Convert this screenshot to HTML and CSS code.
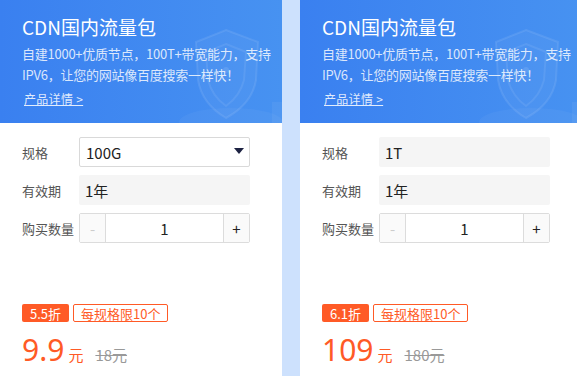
FILE: index.html
```html
<!DOCTYPE html>
<html lang="zh-CN">
<head>
    <meta charset="UTF-8">
    <meta name="viewport" content="width=device-width, initial-scale=1.0">
    <title>CDN流量包</title>
    <link rel="stylesheet" href="styles.css">
</head>
<body>
    <div class="card-list">
        <div class="package-card">
            <div class="package-header">
                <svg class="header-art" width="110" height="110" viewBox="0 0 110 110">
                    <ellipse cx="55" cy="100" rx="52" ry="14" fill="#ffffff" fill-opacity="0.04"/>
                    <path d="M50 8 L82 20 L80 58 Q76 82 50 96 Q26 82 22 58 L20 20 Z" fill="#ffffff" fill-opacity="0.04" stroke="#ffffff" stroke-opacity="0.09" stroke-width="2"/>
                    <path d="M50 22 L70 30 L68 58 Q64 74 50 84 Q36 74 32 58 L30 30 Z" fill="none" stroke="#ffffff" stroke-opacity="0.08" stroke-width="2"/>
                    <circle cx="50" cy="48" r="3" fill="#ffffff" fill-opacity="0.1"/>
                    <rect x="96" y="80" width="14" height="30" fill="#ffffff" fill-opacity="0.05"/>
                </svg>
                <h2 class="package-title">CDN国内流量包</h2>
                <p class="package-desc">自建1000+优质节点，100T+带宽能力，支持IPV6，让您的网站像百度搜索一样快！</p>
                <a class="package-link" href="#">产品详情 &gt;</a>
            </div>
            <div class="package-body">
                <div class="form-row">
                    <span class="form-label">规格</span>
                    <div class="form-select">100G<span class="select-arrow"></span></div>
                </div>
                <div class="form-row">
                    <span class="form-label">有效期</span>
                    <div class="form-static">1年</div>
                </div>
                <div class="form-row">
                    <span class="form-label">购买数量</span>
                    <div class="stepper">
                        <span class="stepper-btn disabled">-</span>
                        <span class="stepper-value">1</span>
                        <span class="stepper-btn">+</span>
                    </div>
                </div>
                <div class="tags">
                    <span class="tag-discount">5.5折</span>
                    <span class="tag-limit">每规格限10个</span>
                </div>
                <div class="price">
                    <span class="price-now">9.9</span>
                    <span class="price-unit">元</span>
                    <span class="price-old">18元</span>
                </div>
            </div>
        </div>

        <div class="package-card">
            <div class="package-header">
                <svg class="header-art" width="110" height="110" viewBox="0 0 110 110">
                    <ellipse cx="55" cy="100" rx="52" ry="14" fill="#ffffff" fill-opacity="0.04"/>
                    <path d="M50 8 L82 20 L80 58 Q76 82 50 96 Q26 82 22 58 L20 20 Z" fill="#ffffff" fill-opacity="0.04" stroke="#ffffff" stroke-opacity="0.09" stroke-width="2"/>
                    <path d="M50 22 L70 30 L68 58 Q64 74 50 84 Q36 74 32 58 L30 30 Z" fill="none" stroke="#ffffff" stroke-opacity="0.08" stroke-width="2"/>
                    <circle cx="50" cy="48" r="3" fill="#ffffff" fill-opacity="0.1"/>
                    <rect x="96" y="80" width="14" height="30" fill="#ffffff" fill-opacity="0.05"/>
                </svg>
                <h2 class="package-title">CDN国内流量包</h2>
                <p class="package-desc">自建1000+优质节点，100T+带宽能力，支持IPV6，让您的网站像百度搜索一样快！</p>
                <a class="package-link" href="#">产品详情 &gt;</a>
            </div>
            <div class="package-body">
                <div class="form-row">
                    <span class="form-label">规格</span>
                    <div class="form-static">1T</div>
                </div>
                <div class="form-row">
                    <span class="form-label">有效期</span>
                    <div class="form-static">1年</div>
                </div>
                <div class="form-row">
                    <span class="form-label">购买数量</span>
                    <div class="stepper">
                        <span class="stepper-btn disabled">-</span>
                        <span class="stepper-value">1</span>
                        <span class="stepper-btn">+</span>
                    </div>
                </div>
                <div class="tags">
                    <span class="tag-discount">6.1折</span>
                    <span class="tag-limit">每规格限10个</span>
                </div>
                <div class="price">
                    <span class="price-now">109</span>
                    <span class="price-unit">元</span>
                    <span class="price-old">180元</span>
                </div>
            </div>
        </div>
    </div>
</body>
</html>
```

FILE: styles.css
```css
body {
    margin: 0;
    font-family: "Noto Sans CJK SC", "Noto Sans", sans-serif;
    background-color: #cde1fd;
    height: 376px;
    overflow: hidden;
}

.card-list {
    display: flex;
    gap: 18px;
}

.package-card {
    flex: 0 0 282px;
    height: 376px;
    background-color: #ffffff;
}

.package-header {
    position: relative;
    height: 123px;
    box-sizing: border-box;
    padding: 13px 6px 0 22px;
    background: linear-gradient(90deg, #3a80f0 0%, #4792f1 100%);
    color: #ffffff;
    overflow: hidden;
}

.header-art {
    position: absolute;
    right: -4px;
    top: 22px;
}

.package-title {
    position: relative;
    margin: 0;
    font-size: 19px;
    font-weight: normal;
    line-height: 28px;
}

.package-desc {
    position: relative;
    margin: 2px 0 0;
    font-size: 13px;
    line-height: 21px;
    letter-spacing: -0.25px;
    color: rgba(255, 255, 255, 0.82);
}

.package-link {
    position: relative;
    display: inline-block;
    margin: 0 0 0 2px;
    font-size: 12px;
    line-height: 20px;
    letter-spacing: 0.3px;
    color: rgba(255, 255, 255, 0.85);
    text-decoration: underline;
}

.package-body {
    padding: 14px 32px 0 22px;
}

.form-row {
    display: flex;
    align-items: center;
    height: 30px;
    margin-bottom: 8px;
}

.form-label {
    width: 57px;
    flex: none;
    font-size: 13px;
    color: #555555;
}

.form-select,
.form-static {
    display: flex;
    align-items: center;
    flex: 1;
    height: 30px;
    box-sizing: border-box;
    padding-left: 6px;
    font-size: 15px;
    color: #222222;
    border-radius: 2px;
}

.form-select {
    border: 1px solid #d9d9d9;
    justify-content: space-between;
    padding-right: 5px;
}

.select-arrow {
    width: 0;
    height: 0;
    border-left: 5px solid transparent;
    border-right: 5px solid transparent;
    border-top: 6px solid #1d2242;
    margin-bottom: 3px;
}

.form-static {
    background-color: #f5f5f5;
}

.stepper {
    display: flex;
    flex: 1;
    height: 30px;
    box-sizing: border-box;
    border: 1px solid #dcdcdc;
    border-radius: 2px;
}

.stepper-btn {
    width: 25px;
    display: flex;
    align-items: center;
    justify-content: center;
    font-size: 15px;
    color: #222222;
    background-color: #fafafa;
}

.stepper-btn.disabled {
    color: #cccccc;
}

.stepper-value {
    flex: 1;
    display: flex;
    align-items: center;
    justify-content: center;
    font-size: 15px;
    color: #222222;
    border-left: 1px solid #dcdcdc;
    border-right: 1px solid #dcdcdc;
}

.tags {
    display: flex;
    gap: 4px;
    margin-top: 61px;
}

.tag-discount,
.tag-limit {
    height: 18px;
    box-sizing: border-box;
    display: flex;
    align-items: center;
    padding: 0 7px;
    font-size: 13px;
    border-radius: 2px;
}

.tag-discount {
    background-color: #ff5a26;
    color: #ffffff;
    padding: 0 8px;
}

.tag-limit {
    border: 1px solid #ff5a26;
    color: #ff5a26;
}

.price {
    display: flex;
    align-items: baseline;
    margin-top: 8px;
}

.price-now {
    font-size: 30px;
    line-height: 40px;
    color: #ff5a26;
    font-family: "Noto Sans", sans-serif;
}

.price-unit {
    margin-left: 4px;
    font-size: 15px;
    color: #ff5a26;
}

.price-old {
    margin-left: 12px;
    font-size: 15px;
    color: #999999;
    text-decoration: line-through;
}
```
